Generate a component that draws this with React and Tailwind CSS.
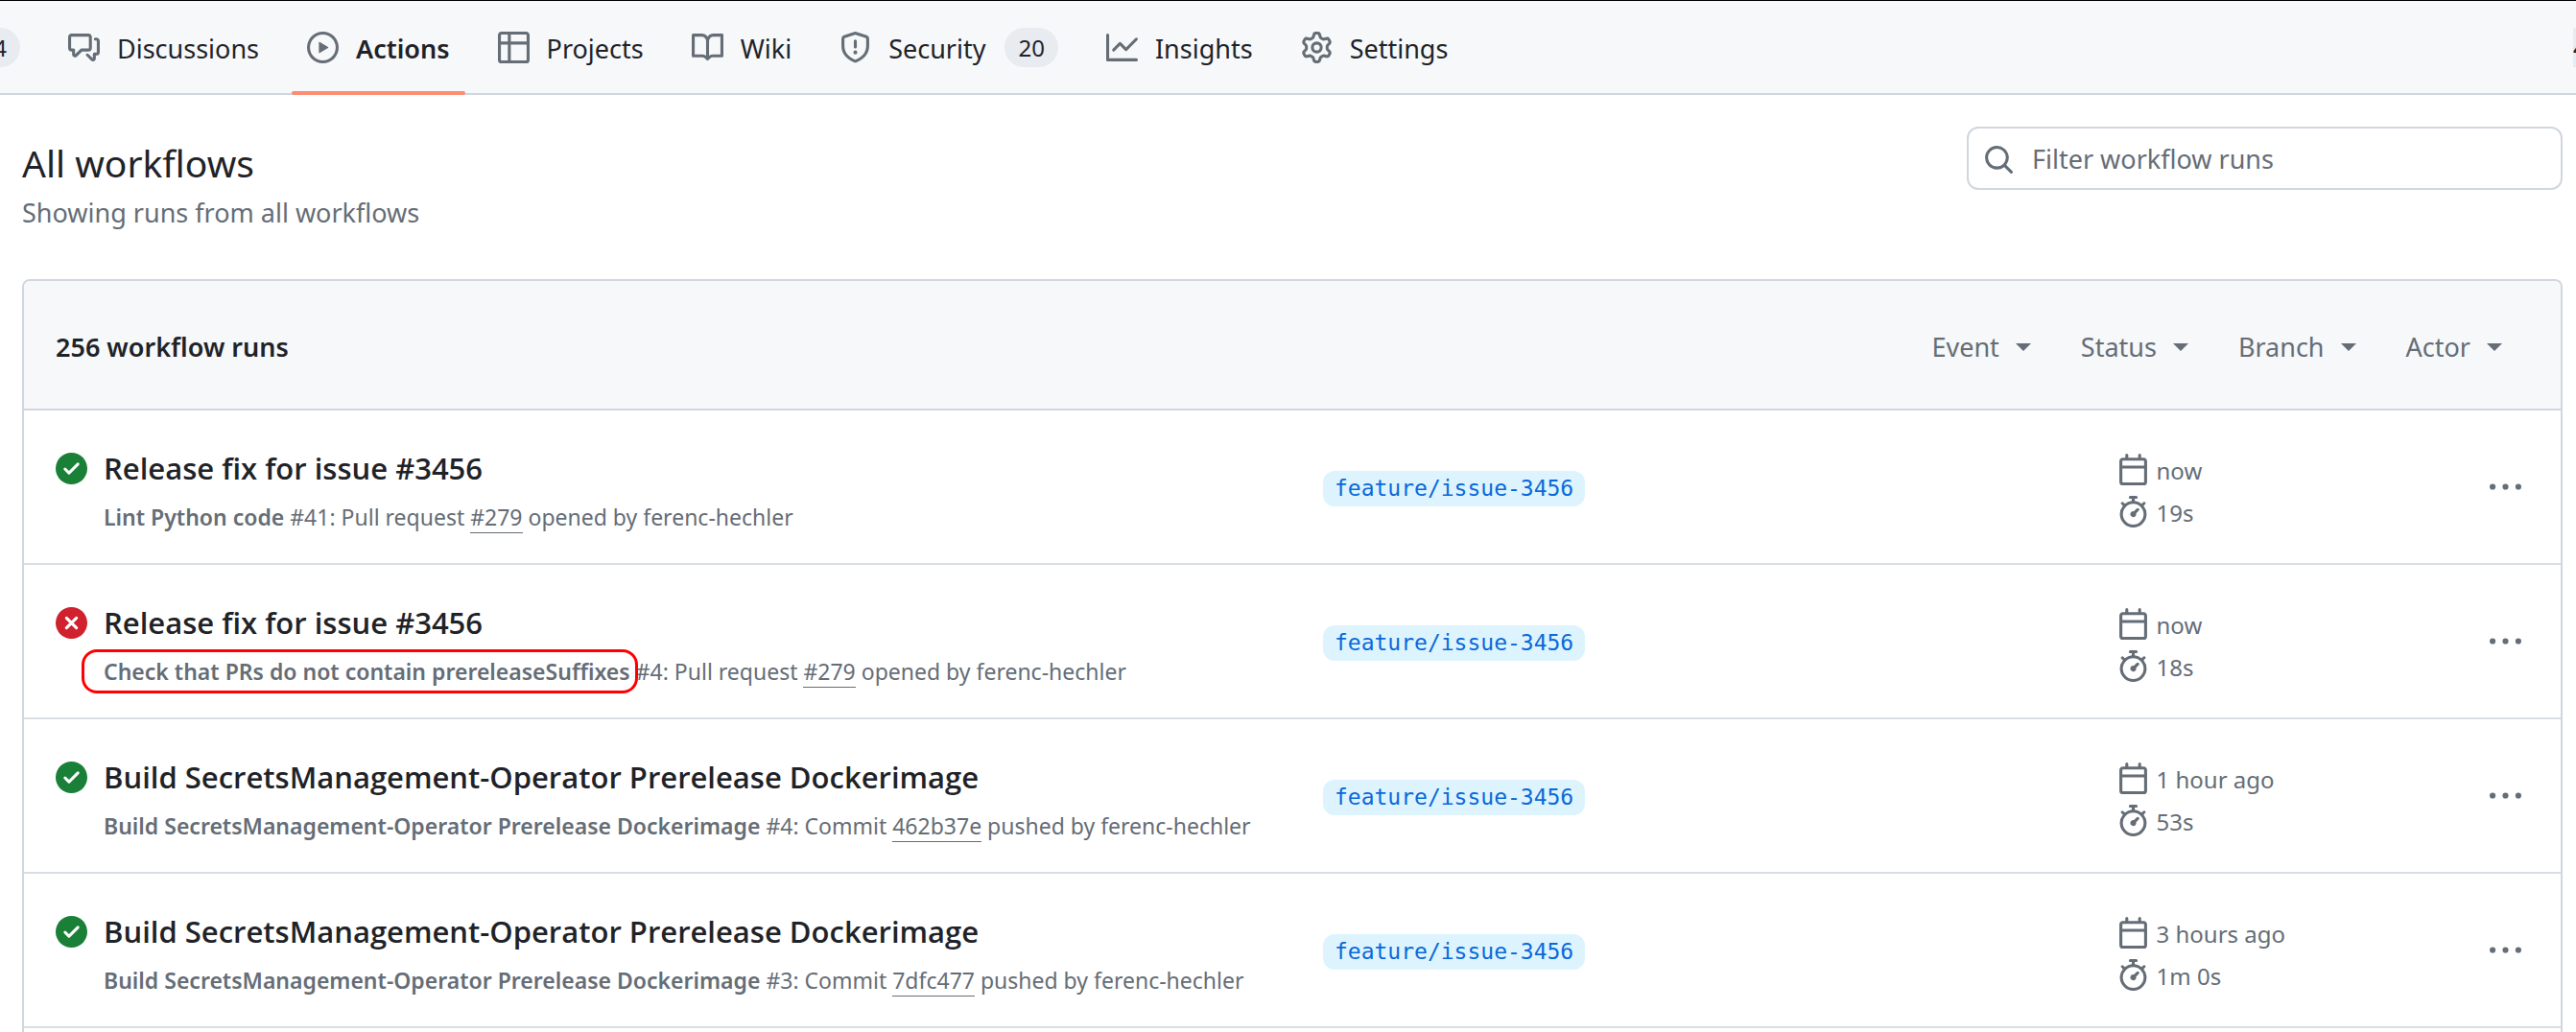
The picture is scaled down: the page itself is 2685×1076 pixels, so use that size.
const PATHS = {
  discussions:
    "M1.75 1h8.5c.966 0 1.75.784 1.75 1.75v5.5A1.75 1.75 0 0 1 10.25 10H7.061l-2.574 2.573A1.458 1.458 0 0 1 2 11.543V10h-.25A1.75 1.75 0 0 1 0 8.25v-5.5C0 1.784.784 1 1.75 1ZM1.5 2.75v5.5c0 .138.112.25.25.25h1a.75.75 0 0 1 .75.75v2.19l2.72-2.72a.749.749 0 0 1 .53-.22h3.5a.25.25 0 0 0 .25-.25v-5.5a.25.25 0 0 0-.25-.25h-8.5a.25.25 0 0 0-.25.25Zm13 2a.25.25 0 0 0-.25-.25h-.5a.75.75 0 0 1 0-1.5h.5c.966 0 1.75.784 1.75 1.75v5.5A1.75 1.75 0 0 1 14.25 12H14v1.543a1.458 1.458 0 0 1-2.487 1.03L9.22 12.28a.749.749 0 0 1 .326-1.275.749.749 0 0 1 .734.215l2.22 2.22v-2.19a.75.75 0 0 1 .75-.75h1a.25.25 0 0 0 .25-.25Z",
  play: "M8 0a8 8 0 1 1 0 16A8 8 0 0 1 8 0ZM1.5 8a6.5 6.5 0 1 0 13 0 6.5 6.5 0 0 0-13 0Zm4.879-2.773 4.264 2.559a.25.25 0 0 1 0 .428l-4.264 2.559A.25.25 0 0 1 6 10.559V5.442a.25.25 0 0 1 .379-.215Z",
  table:
    "M0 1.75C0 .784.784 0 1.75 0h12.5C15.216 0 16 .784 16 1.75v12.5A1.75 1.75 0 0 1 14.25 16H1.75A1.75 1.75 0 0 1 0 14.25ZM6.5 6.5v8h7.75a.25.25 0 0 0 .25-.25V6.5Zm8-1.5V1.75a.25.25 0 0 0-.25-.25H6.5V5Zm-13 1.5v7.75c0 .138.112.25.25.25H5v-8ZM5 5V1.5H1.75a.25.25 0 0 0-.25.25V5Z",
  book: "M0 1.75A.75.75 0 0 1 .75 1h4.253c1.227 0 2.317.59 3 1.501A3.743 3.743 0 0 1 11.006 1h4.245a.75.75 0 0 1 .75.75v10.5a.75.75 0 0 1-.75.75h-4.507a2.25 2.25 0 0 0-1.591.659l-.622.621a.75.75 0 0 1-1.06 0l-.622-.621A2.25 2.25 0 0 0 5.258 13H.75a.75.75 0 0 1-.75-.75Zm7.251 10.324.004-5.073-.002-2.253A2.25 2.25 0 0 0 5.003 2.5H1.5v9h3.757a3.75 3.75 0 0 1 1.994.574ZM8.755 4.75l-.004 7.322a3.752 3.752 0 0 1 1.992-.572H14.5v-9h-3.495a2.25 2.25 0 0 0-2.25 2.25Z",
  shield:
    "M7.467.133a1.748 1.748 0 0 1 1.066 0l5.25 1.68A1.75 1.75 0 0 1 15 3.48V7c0 1.566-.32 3.182-1.303 4.682-.983 1.498-2.585 2.813-5.032 3.855a1.697 1.697 0 0 1-1.33 0c-2.447-1.042-4.049-2.357-5.032-3.855C1.32 10.182 1 8.566 1 7V3.48a1.75 1.75 0 0 1 1.217-1.667Zm.61 1.429a.25.25 0 0 0-.153 0l-5.25 1.68a.25.25 0 0 0-.174.238V7c0 1.358.275 2.666 1.057 3.86.784 1.194 2.121 2.34 4.366 3.297a.196.196 0 0 0 .154 0c2.245-.956 3.582-2.104 4.366-3.298C13.225 9.666 13.5 8.36 13.5 7V3.48a.251.251 0 0 0-.174-.237l-5.25-1.68ZM8.75 4.75v3a.75.75 0 0 1-1.5 0v-3a.75.75 0 0 1 1.5 0ZM9 10.5a1 1 0 1 1-2 0 1 1 0 0 1 2 0Z",
  graph:
    "M1.5 1.75V13.5h13.75a.75.75 0 0 1 0 1.5H.75a.75.75 0 0 1-.75-.75V1.75a.75.75 0 0 1 1.5 0Zm14.28 2.53-5.25 5.25a.75.75 0 0 1-1.06 0L7 7.06 4.28 9.78a.751.751 0 0 1-1.042-.018.751.751 0 0 1-.018-1.042l3.25-3.25a.75.75 0 0 1 1.06 0L10 7.94l4.72-4.72a.751.751 0 0 1 1.042.018.751.751 0 0 1 .018 1.042Z",
  gear: "M8 0a8.2 8.2 0 0 1 .701.031C9.444.095 9.99.645 10.16 1.29l.288 1.107c.018.066.079.158.212.224.231.114.454.243.668.386.123.082.233.09.299.071l1.103-.303c.644-.176 1.392.021 1.82.63.27.385.506.792.704 1.218.315.675.111 1.422-.364 1.891l-.814.806c-.049.048-.098.147-.088.294.016.257.016.515 0 .772-.01.147.038.246.088.294l.814.806c.475.469.679 1.216.364 1.891a7.977 7.977 0 0 1-.704 1.217c-.428.61-1.176.807-1.82.63l-1.102-.302c-.067-.019-.177-.011-.3.071a5.909 5.909 0 0 1-.668.386c-.133.066-.194.158-.211.224l-.29 1.106c-.168.646-.715 1.196-1.458 1.26a8.006 8.006 0 0 1-1.402 0c-.743-.064-1.289-.614-1.458-1.26l-.289-1.106c-.018-.066-.079-.158-.212-.224a5.738 5.738 0 0 1-.668-.386c-.123-.082-.233-.09-.299-.071l-1.103.303c-.644.176-1.392-.021-1.82-.63a8.12 8.12 0 0 1-.704-1.218c-.315-.675-.111-1.422.363-1.891l.815-.806c.05-.048.098-.147.088-.294a6.214 6.214 0 0 1 0-.772c.01-.147-.038-.246-.088-.294l-.815-.806C.635 6.045.431 5.298.746 4.623a7.92 7.92 0 0 1 .704-1.217c.428-.61 1.176-.807 1.82-.63l1.102.302c.067.019.177.011.3-.071.214-.143.437-.272.668-.386.133-.066.194-.158.211-.224l.29-1.106C6.009.645 6.556.095 7.299.03 7.53.01 7.764 0 8 0Zm-.571 1.525c-.036.003-.108.036-.137.146l-.289 1.105c-.147.561-.549.967-.998 1.189-.173.086-.34.183-.5.29-.417.278-.97.423-1.529.27l-1.103-.303c-.109-.03-.175.016-.195.045-.22.312-.412.644-.573.99-.014.031-.021.11.059.19l.815.806c.411.406.562.957.53 1.456a4.709 4.709 0 0 0 0 .582c.032.499-.119 1.05-.53 1.456l-.815.806c-.081.08-.073.159-.059.19.162.346.353.677.573.989.02.03.085.076.195.046l1.102-.303c.56-.153 1.113-.008 1.53.27.161.107.328.204.501.29.447.222.85.629.997 1.189l.289 1.105c.029.109.101.143.137.146a6.6 6.6 0 0 0 1.142 0c.036-.003.108-.036.137-.146l.289-1.105c.147-.561.549-.967.998-1.189.173-.086.34-.183.5-.29.417-.278.97-.423 1.529-.27l1.103.303c.109.029.175-.016.195-.045.22-.313.411-.644.573-.99.014-.031.021-.11-.059-.19l-.815-.806c-.411-.406-.562-.957-.53-1.456a4.709 4.709 0 0 0 0-.582c-.032-.499.119-1.05.53-1.456l.815-.806c.081-.08.073-.159.059-.19a6.464 6.464 0 0 0-.573-.989c-.02-.03-.085-.076-.195-.046l-1.102.303c-.56.153-1.113.008-1.53-.27a4.44 4.44 0 0 0-.501-.29c-.447-.222-.85-.629-.997-1.189l-.289-1.105c-.029-.11-.101-.143-.137-.146a6.6 6.6 0 0 0-1.142 0ZM11 8a3 3 0 1 1-6 0 3 3 0 0 1 6 0ZM9.5 8a1.5 1.5 0 1 0-3.001.001A1.5 1.5 0 0 0 9.5 8Z",
  search:
    "M10.68 11.74a6 6 0 0 1-7.922-8.982 6 6 0 0 1 8.982 7.922l3.04 3.04a.749.749 0 0 1-.326 1.275.749.749 0 0 1-.734-.215ZM11.5 7a4.499 4.499 0 1 0-8.997 0A4.499 4.499 0 0 0 11.5 7Z",
  success:
    "M8 16A8 8 0 1 1 8 0a8 8 0 0 1 0 16Zm3.78-9.72a.751.751 0 0 0-.018-1.042.751.751 0 0 0-1.042-.018L6.75 9.19 5.28 7.72a.751.751 0 0 0-1.042.018.751.751 0 0 0-.018 1.042l2 2a.75.75 0 0 0 1.06 0Z",
  failure:
    "M2.343 13.657A8 8 0 1 1 13.658 2.343 8 8 0 0 1 2.343 13.657ZM6.03 4.97a.751.751 0 0 0-1.042.018.751.751 0 0 0-.018 1.042L6.94 8 4.97 9.97a.749.749 0 0 0 .326 1.275.749.749 0 0 0 .734-.215L8 9.06l1.97 1.97a.749.749 0 0 0 1.275-.326.749.749 0 0 0-.215-.734L9.06 8l1.97-1.97a.749.749 0 0 0-.326-1.275.749.749 0 0 0-.734.215L8 6.94Z",
  calendar:
    "M4.75 0a.75.75 0 0 1 .75.75V2h5V.75a.75.75 0 0 1 1.5 0V2h1.25c.966 0 1.75.784 1.75 1.75v10.5A1.75 1.75 0 0 1 13.25 16H2.75A1.75 1.75 0 0 1 1 14.25V3.75C1 2.784 1.784 2 2.75 2H4V.75A.75.75 0 0 1 4.75 0ZM2.5 7.5v6.75c0 .138.112.25.25.25h10.5a.25.25 0 0 0 .25-.25V7.5Zm10.75-4H2.75a.25.25 0 0 0-.25.25V6h11V3.75a.25.25 0 0 0-.25-.25Z",
  stopwatch:
    "M5.75.75A.75.75 0 0 1 6.5 0h3a.75.75 0 0 1 0 1.5h-.75v1l-.001.041a6.724 6.724 0 0 1 3.464 1.435l.007-.006.75-.75a.749.749 0 0 1 1.275.326.749.749 0 0 1-.215.734l-.75.75-.006.007a6.75 6.75 0 1 1-10.548 0L2.72 5.03l-.75-.75a.751.751 0 0 1 .018-1.042.751.751 0 0 1 1.042-.018l.75.75.007.006A6.72 6.72 0 0 1 7.25 2.541V1.5H6.5a.75.75 0 0 1-.75-.75ZM8 14.5a5.25 5.25 0 1 0-.001-10.501A5.25 5.25 0 0 0 8 14.5Zm.389-6.7 1.33-1.33a.75.75 0 1 1 1.061 1.06L9.45 8.861A1.503 1.503 0 0 1 8 10.75a1.499 1.499 0 1 1 .389-2.95Z",
  kebab:
    "M8 9a1.5 1.5 0 1 0 0-3 1.5 1.5 0 0 0 0 3ZM1.5 9a1.5 1.5 0 1 0 0-3 1.5 1.5 0 0 0 0 3Zm13 0a1.5 1.5 0 1 0 0-3 1.5 1.5 0 0 0 0 3Z",
};

function Icon({ name, className = "" }) {
  return (
    <svg viewBox="0 0 16 16" fill="currentColor" aria-hidden="true" className={`size-[33px] shrink-0 ${className}`}>
      <path d={PATHS[name]} />
    </svg>
  );
}

const TABS = [
  { icon: "discussions", label: "Discussions" },
  { icon: "play", label: "Actions", active: true },
  { icon: "table", label: "Projects" },
  { icon: "book", label: "Wiki" },
  { icon: "shield", label: "Security", count: 20 },
  { icon: "graph", label: "Insights" },
  { icon: "gear", label: "Settings" },
];

const RUNS = [
  { ok: true, title: "Release fix for issue #3456", workflow: "Lint Python code", before: "#41: Pull request", link: "#279", after: "opened by ferenc-hechler", when: "now", took: "19s" },
  { ok: false, marked: true, title: "Release fix for issue #3456", workflow: "Check that PRs do not contain prereleaseSuffixes", before: "#4: Pull request", link: "#279", after: "opened by ferenc-hechler", when: "now", took: "18s" },
  { ok: true, title: "Build SecretsManagement-Operator Prerelease Dockerimage", workflow: "Build SecretsManagement-Operator Prerelease Dockerimage", before: "#4: Commit", link: "462b37e", after: "pushed by ferenc-hechler", when: "1 hour ago", took: "53s" },
  { ok: true, title: "Build SecretsManagement-Operator Prerelease Dockerimage", workflow: "Build SecretsManagement-Operator Prerelease Dockerimage", before: "#3: Commit", link: "7dfc477", after: "pushed by ferenc-hechler", when: "3 hours ago", took: "1m 0s" },
];

function Tab({ icon, label, active, count }) {
  return (
    <a
      href="#"
      aria-current={active ? "page" : undefined}
      className="relative flex h-full items-center px-4 text-[27px] leading-10"
    >
      <Icon name={icon} className="mr-[18px] text-[#656d76]" />
      <span className={active ? "pt-1 font-semibold" : "pt-1"}>{label}</span>
      {count && (
        <span className="ml-5 flex h-[41px] items-center rounded-full bg-[#e8ebef] px-[14px] pt-0.5 text-[24px]">{count}</span>
      )}
      {active && <span className="absolute inset-x-0 -bottom-0.5 h-1 rounded-full bg-[#fd8c73]" />}
    </a>
  );
}

function Run({ run }) {
  return (
    <li className="grid grid-cols-[514fr_322fr_164fr] border-b-2 border-[#d8dee4] pt-10 pb-[30px] pl-[33px] pr-[41px]">
      <div className="flex gap-[17px] whitespace-nowrap">
        <Icon name={run.ok ? "success" : "failure"} className={run.ok ? "mt-1 text-[#1a7f37]" : "mt-1 text-[#cf222e]"} />
        <div>
          <a href="#" className="block font-['Open_Sans',sans-serif] text-[31px] leading-10 font-semibold">{run.title}</a>
          <p className="mt-[13px] text-[23px] leading-9 text-[#656d76]">
            <span className="relative font-semibold">
              {run.workflow}
              {run.marked && (
                <span className="absolute -top-[7px] -right-2 -left-[23px] h-[46px] rounded-2xl border-3 border-[#ff0000]" />
              )}
            </span>{" "}
            {run.before}{" "}
            <a href="#" className="border-b border-[#656d76]">{run.link}</a>{" "}
            {run.after}
          </p>
        </div>
      </div>
      <div className="flex h-20 items-center pt-0.5">
        <a href="#" className="rounded-xl bg-[#ddf4ff] px-3 font-['DejaVu_Sans_Mono',monospace] text-[23px] leading-[37px] text-[#0969da]">
          feature/issue-3456
        </a>
      </div>
      <div className="flex h-20 items-center justify-between text-[#656d76]">
        <div className="flex flex-col gap-1 pt-1.5 text-[24px] leading-9">
          <span className="flex items-center gap-2"><Icon name="calendar" /><span className="pt-1">{run.when}</span></span>
          <span className="flex items-center gap-2"><Icon name="stopwatch" /><span className="pt-1">{run.took}</span></span>
        </div>
        <button type="button" aria-label="Show options"><Icon name="kebab" /></button>
      </div>
    </li>
  );
}

export default function App() {
  return (
    <div className="flex h-screen flex-col overflow-hidden bg-white font-['Noto_Sans','Open_Sans',sans-serif] text-[#1f2328]">
      <nav aria-label="Repository" className="flex h-[99px] shrink-0 items-center justify-between border-t border-b-2 border-t-black border-b-[#d0d7de] bg-[#f6f8fa]">
        <div className="flex h-full items-center gap-5">
          <span className="flex h-[41px] w-[21px] items-center justify-end rounded-r-full bg-[#e8ebef] pt-0.5 pr-[14px] text-[24px]">4</span>
          <div className="flex h-full items-center gap-[18px] pl-[14px]">
            {TABS.map((tab) => (
              <Tab key={tab.label} {...tab} />
            ))}
          </div>
        </div>
        <span className="flex h-[41px] w-[3px] items-center overflow-hidden bg-[#e8ebef] pt-0.5 text-[24px]">4</span>
      </nav>

      <main className="flex flex-1 flex-col pl-[23px] pr-[14px]">
        <header className="flex items-start justify-between pt-[33px]">
          <div>
            <h1 className="pt-3 text-[39px] leading-[52px]">All workflows</h1>
            <p className="pt-1.5 text-[27px] leading-10 text-[#656d76]">Showing runs from all workflows</p>
          </div>
          <label className="flex h-[66px] w-[621px] items-center rounded-xl border-2 border-[#d0d7de] bg-white pt-0.5 pl-[15px] text-[#656d76]">
            <Icon name="search" />
            <input
              type="search"
              aria-label="Filter workflow runs"
              placeholder="Filter workflow runs"
              className="ml-[18px] min-w-0 flex-1 bg-transparent text-[27px] leading-10 outline-none placeholder:text-[#656d76]"
            />
          </label>
        </header>

        <section className="mt-[49px] flex flex-1 flex-col rounded-t-lg border-2 border-b-0 border-[#d0d7de]">
          <div className="flex h-[135px] items-center justify-between rounded-t-md border-b-2 border-[#d0d7de] bg-[#f6f8fa] pt-1 pl-[33px] pr-[61px] text-[27px] leading-10">
            <h2 className="font-semibold">256 workflow runs</h2>
            <div className="flex gap-[52px] text-[#656d76]">
              {["Event", "Status", "Branch", "Actor"].map((name) => (
                <button key={name} type="button" className="flex items-center gap-[17px]">
                  {name}
                  <span className="border-x-8 border-t-8 border-x-transparent border-t-current" />
                </button>
              ))}
            </div>
          </div>
          <ul>
            {RUNS.map((run, i) => (
              <Run key={i} run={run} />
            ))}
          </ul>
        </section>
      </main>
    </div>
  );
}
